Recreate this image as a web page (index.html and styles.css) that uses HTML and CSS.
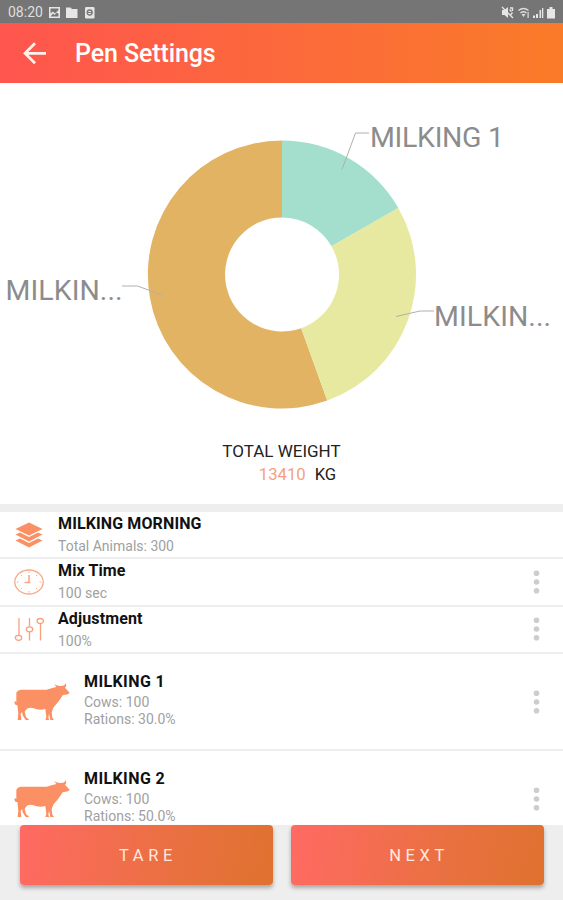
FILE: index.html
```html
<!DOCTYPE html>
<html lang="en">
<head>
<meta charset="utf-8">
<title>Pen Settings</title>
<link rel="stylesheet" href="styles.css">
</head>
<body>
<svg class="defs" width="0" height="0" aria-hidden="true">
  <symbol id="cow" viewBox="42 95 171 120">
    <path d="M49 127Q52 119 62 118L140 118Q155 114 169 110L163 102Q172 107 180 107L189 106Q197 104 195 97Q202 106 195 112L209 127L204 132L188 135Q181 147 172 158Q164 166 160 172L155 186L157 202L162 209H151L147 190L145 202L148 209H136L139 200L136 176Q118 182 98 173Q88 170 80 176L74 184L78 200L88 209H77L68 195L66 184L62 192L64 209H53L55 190L52 164L47 164L43 157L45 152L49 155Z"/>
  </symbol>
  <symbol id="dots" viewBox="0 0 8 26">
    <circle cx="4.5" cy="4.3" r="2.8"/><circle cx="4.5" cy="13" r="2.8"/><circle cx="4.5" cy="21.700" r="2.8"/>
  </symbol>
</svg>
<div class="screen">
  <div class="status">
    <span class="clock">08:20</span>
    <svg class="status-left" width="48" height="13" viewBox="0 0 48 13">
      <path fill="#e6e6e6" fill-rule="evenodd" d="M1 1h11v11H1zM2.500 2.500v5l2.500-2 2 2 3.500-3.500v-1.500zM2.500 10.500h8V8L9 6.500 6.500 9 5 7.500z"/>
      <path fill="#e6e6e6" d="M18 1.500h4.500l1.500 1.500h5.500v9H18z"/>
      <rect x="37" y="1" width="9.500" height="11.500" rx="1.200" fill="#e6e6e6"/>
      <circle cx="41.700" cy="6.500" r="2.500" fill="none" stroke="#777" stroke-width="1.300"/>
      <path d="M40 6.500h4" stroke="#777"/>
    </svg>
    <svg class="status-right" width="56" height="13" viewBox="0 0 56 13">
      <path fill="#e6e6e6" d="M1 4h2.500L7 1v11L3.500 9H1z"/>
      <path stroke="#e6e6e6" stroke-width="1.300" fill="none" d="M1 1l11 11M8.500 3.500l2 2M9 2h2.500v3M9 9.500l2.500-3"/>
      <path fill="none" stroke="#ddd" stroke-width="1.400" d="M17.500 4.500q5-4 10 0M19.500 7q3-2.500 6 0"/>
      <path fill="#ddd" d="M20.500 8h4L22.500 11zM26.500 6h1.200v6h-1.200z"/>
      <path fill="#e6e6e6" d="M32 9.500h2v2.500h-2zM35 8h2v4h-2zM38.500 4h1.600v8h-1.600zM41 2h1.300v10H41zM46 3h2.500V1h3v2H54v9.500h-8z"/>
    </svg>
  </div>
  <header class="appbar">
    <svg class="back" width="24" height="24" viewBox="0 0 24 24"><path d="M23 12.300H2M12 2.300L2 12.300l10 10"/></svg>
    <h1>Pen Settings</h1>
  </header>
  <section class="summary">
    <svg class="chart" width="563" height="350" viewBox="0 83 563 350">
      <path fill="#e3b364" d="M282 140.500A134 134 0 1 0 327.200 400.600L301.200 328.200A57 57 0 1 1 282 217.500Z"/>
      <path fill="#a3dfcc" d="M282 140.500A134 134 0 0 1 398.300 207.900L331.500 246.200A57 57 0 0 0 282 217.500Z"/>
      <path fill="#e6e99f" d="M398.300 207.900A134 134 0 0 1 327.200 400.600L301.200 328.200A57 57 0 0 0 331.500 246.200Z"/>
      <path class="leader" d="M342 169.500L355.500 133H369M396 316.500L420 311H434M122 286H137.500L162 295"/>
      <text x="370" y="146.800" textLength="134">MILKING 1</text>
      <text x="434" y="325.500" textLength="117">MILKIN...</text>
      <text x="5.500" y="300" textLength="117">MILKIN...</text>
    </svg>
    <div class="total-label">TOTAL WEIGHT</div>
    <div class="total"><span class="value">13410</span><span>KG</span></div>
  </section>
  <main class="list">
    <div class="row">
      <svg class="icon" width="30" height="30" viewBox="0 0 30 30">
        <g fill="#fb9065"><path d="M15 2.500L28.500 9 15 15.500 1.500 9z"/><path d="M1.500 14.500L6 12.500l9 4.500 9-4.500 4.500 2L15 21.500z"/><path d="M1.500 20.500L6 18.500l9 4.500 9-4.500 4.500 2L15 27.500z"/></g>
      </svg>
      <div class="text"><div class="name">MILKING MORNING</div><div class="sub">Total Animals: 300</div></div>
    </div>
    <div class="row">
      <svg class="icon" width="30" height="30" viewBox="0 0 30 30" fill="none" stroke="#f8aa88">
        <ellipse cx="15" cy="15" rx="14.200" ry="12" stroke-width="1.300"/>
        <path stroke-width="1.600" d="M15 8v7.500M10.500 15.500h6"/>
        <path d="M15 4.500v1.500M15 24v1.500M3 15h1.500M25.500 15H27M7 8l1 1M23 8l-1 1M7 22l1-1M23 22l-1-1"/>
      </svg>
      <div class="text"><div class="name">Mix Time</div><div class="sub">100 sec</div></div>
      <svg class="more" width="8" height="26"><use href="#dots"/></svg>
    </div>
    <div class="row">
      <svg class="icon" width="30" height="30" viewBox="0 0 30 30" fill="none" stroke="#f8a17b" stroke-width="1.300">
        <path d="M5 4v17M15.500 4v8.500M15.500 18v8.500M26.500 10v16.500"/>
        <ellipse cx="4.500" cy="23.800" rx="3.200" ry="2.500"/><ellipse cx="15.500" cy="15.300" rx="3.200" ry="2.500"/><ellipse cx="26.300" cy="7" rx="3.200" ry="2.500"/>
      </svg>
      <div class="text"><div class="name">Adjustment</div><div class="sub">100%</div></div>
      <svg class="more" width="8" height="26"><use href="#dots"/></svg>
    </div>
    <div class="pen">
      <svg class="cow" width="57" height="40"><use href="#cow"/></svg>
      <div class="text"><div class="name">MILKING 1</div><div class="sub">Cows: 100</div><div class="sub">Rations: 30.0%</div></div>
      <svg class="more" width="8" height="26"><use href="#dots"/></svg>
    </div>
    <div class="pen">
      <svg class="cow" width="57" height="40"><use href="#cow"/></svg>
      <div class="text"><div class="name">MILKING 2</div><div class="sub">Cows: 100</div><div class="sub">Rations: 50.0%</div></div>
      <svg class="more" width="8" height="26"><use href="#dots"/></svg>
    </div>
  </main>
  <footer class="actions">
    <button type="button">TARE</button>
    <button type="button">NEXT</button>
  </footer>
</div>
</body>
</html>
```
FILE: styles.css
```css
* { box-sizing: border-box; }
body { margin: 0; font-family: Roboto, "Liberation Sans", sans-serif; background: #fff; }
.defs { display: block; height: 0; }
.screen { width: 563px; height: 900px; display: flex; flex-direction: column; overflow: hidden; }
.status { flex: none; height: 23px; background: #757575; color: #dedede; display: flex; align-items: center; padding: 1px 6px 0 8px; }
.clock { font-size: 14px; line-height: 20px; width: 40px; }
.status-right { margin-left: auto; }
.appbar { flex: none; height: 60px; padding: 0 23px; display: flex; align-items: center; background: linear-gradient(90deg, #ff554f, #fc673d 45%, #f97b28); color: #fff; }
.back { fill: none; stroke: #fff3ec; stroke-width: 2.700; }
h1 { margin: 2px 0 0 28px; font-size: 25px; font-weight: 500; line-height: 30px; letter-spacing: -0.100px; }
.summary { flex: none; height: 429px; border-bottom: 8px solid #eee; }
.chart { display: block; }
.chart text { font-size: 28.500px; fill: #8c8c8c; }
.leader { fill: none; stroke: #b4b0aa; stroke-width: 1; }
.total-label { margin-top: 7px; text-align: center; font-size: 17px; line-height: 23px; color: #222; }
.total { display: flex; justify-content: center; gap: 9px; padding-left: 32px; font-size: 16.700px; line-height: 23px; color: #222; }
.value { color: #f5a17e; }
.list { flex: 1; min-height: 0; overflow: hidden; }
.row { height: 47.300px; padding: 0 23px 0 14px; display: flex; align-items: center; border-bottom: 2px solid #eee; }
.row .text { margin-left: 14px; align-self: flex-start; padding-top: 1px; }
.name { font-size: 16px; line-height: 22px; font-weight: 700; color: #111; letter-spacing: 0.120px; }
.sub { font-size: 14px; line-height: 22px; color: #a0a0a0; }
.more { margin-left: auto; fill: #cdcdcd; }
.pen { height: 97.500px; padding: 0 23px 0 14px; display: flex; align-items: center; border-bottom: 2px solid #eee; }
.pen .text { margin-left: 13px; margin-top: -6px; }
.pen .name { line-height: 24px; letter-spacing: 0.400px; }
.pen .sub { line-height: 17px; }
.cow { fill: #fb9065; }
.actions { flex: none; height: 75px; padding: 0 19px 15px 20px; display: grid; grid-template-columns: 1fr 1fr; gap: 18px; background: #eee; }
button { border: 0; padding: 0 0 0 3px; border-radius: 4px; font: 400 16.500px Roboto, sans-serif; letter-spacing: 4.600px; color: #ffe9df; background: linear-gradient(100deg, #ff6a63, #ea7041 60%, #df722f); box-shadow: 0 3px 4px rgba(0, 0, 0, .3); }
```
